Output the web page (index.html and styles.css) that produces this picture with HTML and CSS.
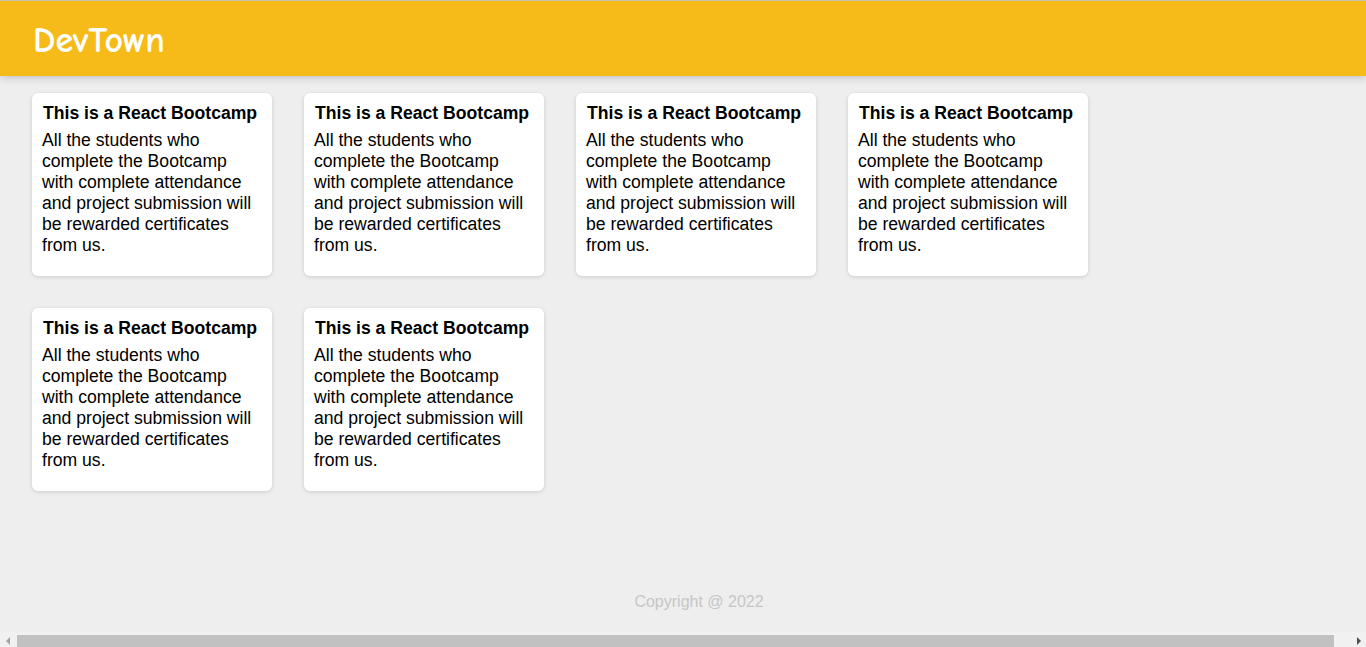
FILE: index.html
```html
<!DOCTYPE html>
<html lang="en">
<head>
<meta charset="utf-8">
<title>DevTown</title>
<link rel="stylesheet" href="styles.css">
</head>
<body>
<header class="topbar">
  <h1 class="brand">DevTown</h1>
</header>
<main class="cards">
  <div class="card">
    <h3 class="card-title">This is a React Bootcamp</h3>
    <p class="card-text">All the students who complete the Bootcamp with complete attendance and project submission will be rewarded certificates from us.</p>
  </div>
  <div class="card">
    <h3 class="card-title">This is a React Bootcamp</h3>
    <p class="card-text">All the students who complete the Bootcamp with complete attendance and project submission will be rewarded certificates from us.</p>
  </div>
  <div class="card">
    <h3 class="card-title">This is a React Bootcamp</h3>
    <p class="card-text">All the students who complete the Bootcamp with complete attendance and project submission will be rewarded certificates from us.</p>
  </div>
  <div class="card">
    <h3 class="card-title">This is a React Bootcamp</h3>
    <p class="card-text">All the students who complete the Bootcamp with complete attendance and project submission will be rewarded certificates from us.</p>
  </div>
  <div class="card">
    <h3 class="card-title">This is a React Bootcamp</h3>
    <p class="card-text">All the students who complete the Bootcamp with complete attendance and project submission will be rewarded certificates from us.</p>
  </div>
  <div class="card">
    <h3 class="card-title">This is a React Bootcamp</h3>
    <p class="card-text">All the students who complete the Bootcamp with complete attendance and project submission will be rewarded certificates from us.</p>
  </div>
</main>
<footer class="footer">Copyright @ 2022</footer>
<div class="hscroll" aria-hidden="true">
  <span class="hscroll-arrow hscroll-left"></span>
  <span class="hscroll-thumb"></span>
  <span class="hscroll-arrow hscroll-right"></span>
</div>
</body>
</html>
```

FILE: styles.css
```css
html, body {
  margin: 0;
  padding: 0;
}
body {
  background: #eeeeee;
  font-family: "Liberation Sans", Arial, sans-serif;
  color: #000;
}
.topbar {
  height: 75px;
  border-top: 1px solid #c9c2ad;
  background: #f6bb18;
  box-shadow: 0 2px 8px rgba(0, 0, 0, 0.18);
  display: flex;
  align-items: center;
  padding-left: 33px;
  position: relative;
}
.brand {
  margin: 0;
  color: #fff;
  font-family: "Comic Sans MS", "Comic Neue", cursive;
  font-weight: 700;
  font-size: 36px;
  line-height: 1;
  padding-top: 4px;
}
.cards {
  display: grid;
  grid-template-columns: repeat(4, 240px);
  column-gap: 32px;
  row-gap: 32px;
  padding: 17px 32px 0;
}
.card {
  background: #fff;
  border-radius: 6px;
  box-shadow: 0 1px 4px rgba(0, 0, 0, 0.14);
  padding: 10px 10px 20px;
}
.card-title {
  margin: 0 0 6px;
  font-size: 17.6px;
  font-weight: 700;
  line-height: normal;
  padding-left: 1px;
}
.card-text {
  margin: 0;
  font-size: 17.6px;
  line-height: 21px;
}
.footer {
  box-sizing: border-box;
  width: 100%;
  padding-left: 32px;
  margin-top: 102px;
  text-align: center;
  color: #c6c6c6;
  font-size: 16px;
}
.hscroll {
  position: fixed;
  left: 0;
  right: 0;
  bottom: 0;
  height: 15px;
  background: #f1f1f1;
  display: flex;
  align-items: flex-end;
}
.hscroll-arrow {
  width: 15px;
  height: 15px;
  display: flex;
  align-items: center;
  justify-content: center;
  flex: none;
}
.hscroll-arrow::before {
  content: "";
  width: 0;
  height: 0;
  border-top: 4px solid transparent;
  border-bottom: 4px solid transparent;
  margin-top: 3px;
}
.hscroll-left::before {
  border-right: 4px solid #a3a3a3;
}
.hscroll-right {
  margin-left: auto;
}
.hscroll-right::before {
  border-left: 4px solid #505050;
}
.hscroll-thumb {
  width: 1317px;
  height: 12px;
  margin-left: 2px;
  background: #c1c1c1;
  flex: none;
}
```
